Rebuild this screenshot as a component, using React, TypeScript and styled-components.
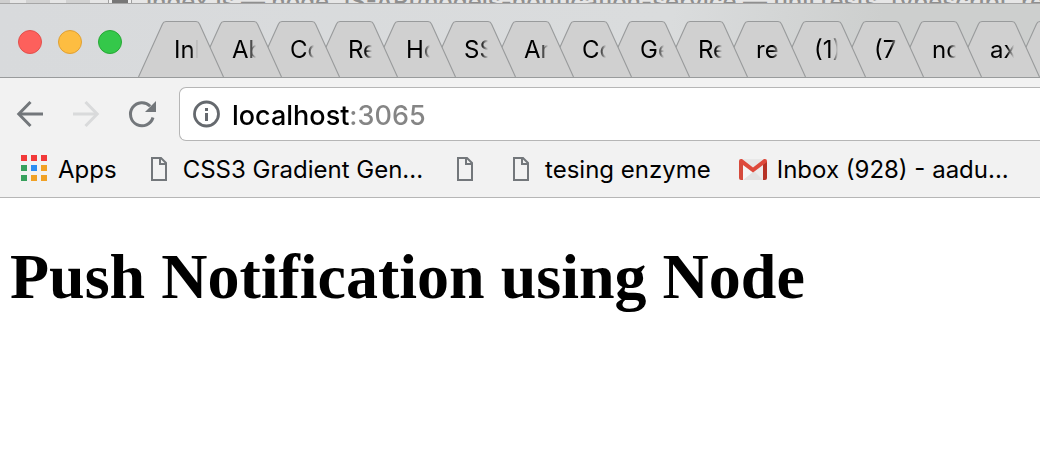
import React from "react";
import styled, { createGlobalStyle } from "styled-components";

const GlobalStyle = createGlobalStyle`
  *, *::before, *::after { box-sizing: border-box; }
  body {
    margin: 0;
    background: #fff;
    overflow-x: hidden;
  }
`;

const uiFont = `Inter, "Liberation Sans", sans-serif`;

/* ---------- window behind the browser ---------- */

const BackWindow = styled.div`
  display: flex;
  align-items: center;
  height: 3px;
  overflow: hidden;
  background: #e6e6e6;
  font: 450 24px/28px ${uiFont};
  color: #8f8f8f;
  white-space: nowrap;
`;

const BackControls = styled.div`
  display: flex;
  flex: none;
  width: 146px;
  height: 3px;
`;

const BackBlock = styled.span<{ $color: string; $width: number }>`
  flex: none;
  width: ${(p) => p.$width}px;
  background: ${(p) => p.$color};
`;

/* ---------- title bar ---------- */

const TitleBar = styled.header`
  display: flex;
  align-items: flex-end;
  height: 75px;
  overflow: hidden;
  border-top: 1px solid #a6a6a6;
  border-bottom: 1px solid #999b9c;
  background: linear-gradient(100deg, #d8dadc 0%, #dadcdd 64%, #cdcfce 84%, #cdcfce 100%);
`;

const Lights = styled.div`
  display: flex;
  flex: none;
  align-self: center;
  gap: 16px;
  width: 138px;
  padding-top: 2px;
  padding-left: 18px;
`;

const Light = styled.button<{ $fill: string; $edge: string }>`
  width: 24px;
  height: 24px;
  padding: 0;
  border: 1px solid ${(p) => p.$edge};
  border-radius: 50%;
  background: ${(p) => p.$fill};
`;

const TabStrip = styled.nav`
  display: flex;
  flex: 1;
  min-width: 0;
`;

const TabButton = styled.button<{ $width: number }>`
  display: grid;
  flex: none;
  width: ${(p) => p.$width}px;
  height: 56px;
  margin-right: -28px;
  padding: 0;
  border: 0;
  background: none;
  color: #000;
  font: 400 24px/58px ${uiFont};
  text-align: left;

  > * { grid-area: 1 / 1; }
  > svg { display: block; overflow: visible; }
`;

const TabLabel = styled.span`
  width: 24px;
  margin-left: 36px;
  overflow: hidden;
  white-space: nowrap;
  mask-image: linear-gradient(to right, #000 70%, transparent 100%);
`;

type TabInfo = { label: string; width: number };

const tabs: TabInfo[] = [
  { label: "Inb", width: 86 },
  { label: "Ab", width: 86 },
  { label: "Co", width: 86 },
  { label: "Re", width: 86 },
  { label: "Ho", width: 86 },
  { label: "SS", width: 88 },
  { label: "Ar", width: 86 },
  { label: "Co", width: 86 },
  { label: "Ge", width: 86 },
  { label: "Re", width: 86 },
  { label: "re", width: 86 },
  { label: "(1)", width: 88 },
  { label: "(7", width: 86 },
  { label: "no", width: 86 },
  { label: "ax", width: 86 },
  { label: "", width: 86 },
];

function Tab({ label, width, order }: TabInfo & { order: number }) {
  const d = `M0.5 56 L24.5 3 Q25.5 0.5 28 0.5 H${width - 28} Q${width - 25.5} 0.5 ${width - 24.5} 3 L${width - 0.5} 56`;
  return (
    <TabButton type="button" $width={width} style={{ zIndex: order }} aria-label={label || "Tab"}>
      <svg width={width} height="56" aria-hidden="true">
        <path d={d} fill="#d0d0d0" stroke="#999b9c" strokeWidth="1.1" />
      </svg>
      <TabLabel>{label}</TabLabel>
    </TabButton>
  );
}

/* ---------- toolbar ---------- */

const Chrome = styled.section`
  border-bottom: 1px solid #b6b6b6;
  background: #f2f2f2;
  font-family: ${uiFont};
`;

const Toolbar = styled.div`
  display: flex;
  align-items: center;
  padding-top: 9px;
`;

const NavButtons = styled.div`
  display: flex;
  flex: none;
  gap: 24px;
  width: 179px;
  padding-left: 14px;
`;

const NavButton = styled.button`
  width: 32px;
  height: 32px;
  padding: 0;
  border: 0;
  background: none;
  color: #73777b;

  &:disabled { color: #d9dadb; }
  > svg { display: block; }
`;

const AddressBar = styled.label`
  display: flex;
  flex: 1;
  align-items: center;
  gap: 11px;
  min-width: 0;
  height: 54px;
  padding-left: 13px;
  border: 1px solid #b6b6b6;
  border-right: 0;
  border-radius: 7px 0 0 7px;
  background: #fff;

  > svg { flex: none; }
`;

/* The host is black and the port grey, split by a gradient clipped to the text. */
const AddressInput = styled.input`
  flex: 1;
  min-width: 0;
  height: 44px;
  padding: 2px 0 0;
  border: 0;
  outline: 0;
  background: linear-gradient(to right, #000 117px, #858585 117px);
  background-clip: text;
  -webkit-background-clip: text;
  -webkit-text-fill-color: transparent;
  color: #000;
  font: 450 27px/40px ${uiFont};
`;

/* ---------- bookmarks ---------- */

const Bookmarks = styled.nav`
  display: flex;
  align-items: center;
  gap: 28px;
  height: 56px;
  padding-top: 2px;
  padding-left: 20px;
  overflow: hidden;
`;

const Bookmark = styled.a`
  display: flex;
  flex: none;
  align-items: center;
  gap: 10px;
  color: #000;
  font-size: 24px;
  line-height: 28px;
  text-decoration: none;
  white-space: nowrap;

  > svg {
    display: block;
    flex: none;
    margin-bottom: 2px;
  }
`;

const red = "#f23a3a";
const green = "#37a05c";
const blue = "#2c8df2";
const orange = "#f1a125";
const appColors = [red, red, red, green, blue, orange, green, orange, orange];

function AppsIcon() {
  return (
    <svg width="28" height="28" aria-hidden="true">
      {appColors.map((fill, i) => (
        <rect key={i} x={1 + (i % 3) * 10} y={Math.floor(i / 3) * 10} width="6" height="6" fill={fill} />
      ))}
    </svg>
  );
}

function PageIcon() {
  return (
    <svg width="28" height="28" aria-hidden="true" fill="none" stroke="#73777b" strokeWidth="2">
      <path d="M7 3 H16 L21 8 V25 H7 Z" />
      <path d="M15 3 V9 H21" />
    </svg>
  );
}

function GmailIcon() {
  return (
    <svg width="28" height="28" aria-hidden="true">
      <path d="M2 4 H26 V25 H2 Z" fill="#ececec" />
      <path d="M4 25 L14 15 L24 25 Z" fill="#e2e2e2" />
      <path d="M4 9 L14 17 L4 25 Z" fill="#f5f5f5" />
      <path d="M3 4 H25 L14 12.5 Z" fill="#e8e8e8" />
      <path d="M0 6 L4 8 V25 H2 Q0 25 0 23 Z" fill="#d54b3d" />
      <path d="M28 6 L24 8 V25 H26 Q28 25 28 23 Z" fill="#b63226" />
      <path d="M0 6 Q0 4 2 4 H3 L14 12.5 L25 4 H26 Q28 4 28 6 V7 L14 17.5 L0 7 Z" fill="#de4a3c" />
    </svg>
  );
}

/* ---------- page ---------- */

const Page = styled.main`
  padding: 42px 10px;
`;

const Heading = styled.h1`
  margin: 0;
  color: #000;
  font: bold 64px/74px "Liberation Serif", "Times New Roman", serif;
`;

export default function App() {
  return (
    <>
      <GlobalStyle />
      <BackWindow aria-hidden="true">
        <BackControls>
          <BackBlock $width={10} $color="#cfcfcf" />
          <BackBlock $width={16} $color="#e6e6e6" />
          <BackBlock $width={24} $color="#d2d2d2" />
          <BackBlock $width={16} $color="#e6e6e6" />
          <BackBlock $width={24} $color="#d2d2d2" />
          <BackBlock $width={18} $color="#e6e6e6" />
          <BackBlock $width={1} $color="#a0a0a0" />
          <BackBlock $width={3} $color="#f0f0f0" />
          <BackBlock $width={16} $color="#777777" />
          <BackBlock $width={3} $color="#f0f0f0" />
          <BackBlock $width={1} $color="#a0a0a0" />
        </BackControls>
        index.js — node.JS-API/nodejs-notification-service — unitTests, typescript, re
      </BackWindow>
      <TitleBar>
        <Lights>
          <Light type="button" aria-label="Close" $fill="#fd605c" $edge="#e2504c" />
          <Light type="button" aria-label="Minimize" $fill="#fdbd41" $edge="#e0a033" />
          <Light type="button" aria-label="Zoom" $fill="#34c84a" $edge="#27a835" />
        </Lights>
        <TabStrip aria-label="Tabs">
          {tabs.map((tab, i) => (
            <Tab key={i} {...tab} order={tabs.length - i} />
          ))}
        </TabStrip>
      </TitleBar>
      <Chrome>
        <Toolbar>
          <NavButtons>
            <NavButton type="button" aria-label="Back">
              <svg width="32" height="32" fill="none" stroke="currentColor" strokeWidth="3">
                <path d="M29 16 H5" />
                <path d="M16.5 4 L4.8 16 L16.5 28" />
              </svg>
            </NavButton>
            <NavButton type="button" aria-label="Forward" disabled>
              <svg width="32" height="32" fill="none" stroke="currentColor" strokeWidth="3">
                <path d="M3 16 H27" />
                <path d="M15.5 4 L27.2 16 L15.5 28" />
              </svg>
            </NavButton>
            <NavButton type="button" aria-label="Reload">
              <svg width="32" height="32">
                <path
                  d="M27 19.5 A11.5 11.5 0 1 1 24.2 8.2"
                  fill="none"
                  stroke="currentColor"
                  strokeWidth="3"
                />
                <path d="M30 3 V14 H19 Z" fill="currentColor" />
              </svg>
            </NavButton>
          </NavButtons>
          <AddressBar>
            <svg width="28" height="28" aria-hidden="true">
              <circle cx="13.5" cy="14" r="12" fill="none" stroke="#65696e" strokeWidth="2.8" />
              <rect x="12" y="8" width="3" height="3" fill="#65696e" />
              <rect x="12" y="13" width="3" height="8" fill="#65696e" />
            </svg>
            <AddressInput type="text" aria-label="Address" defaultValue="localhost:3065" spellCheck={false} />
          </AddressBar>
        </Toolbar>
        <Bookmarks aria-label="Bookmarks">
          <Bookmark href="#apps">
            <AppsIcon />
            Apps
          </Bookmark>
          <Bookmark href="#gradient">
            <PageIcon />
            CSS3 Gradient Gen...
          </Bookmark>
          <Bookmark href="#page" aria-label="Untitled bookmark">
            <PageIcon />
          </Bookmark>
          <Bookmark href="#enzyme">
            <PageIcon />
            tesing enzyme
          </Bookmark>
          <Bookmark href="#inbox">
            <GmailIcon />
            Inbox (928) - aadu...
          </Bookmark>
        </Bookmarks>
      </Chrome>
      <Page>
        <Heading>Push Notification using Node</Heading>
      </Page>
    </>
  );
}
